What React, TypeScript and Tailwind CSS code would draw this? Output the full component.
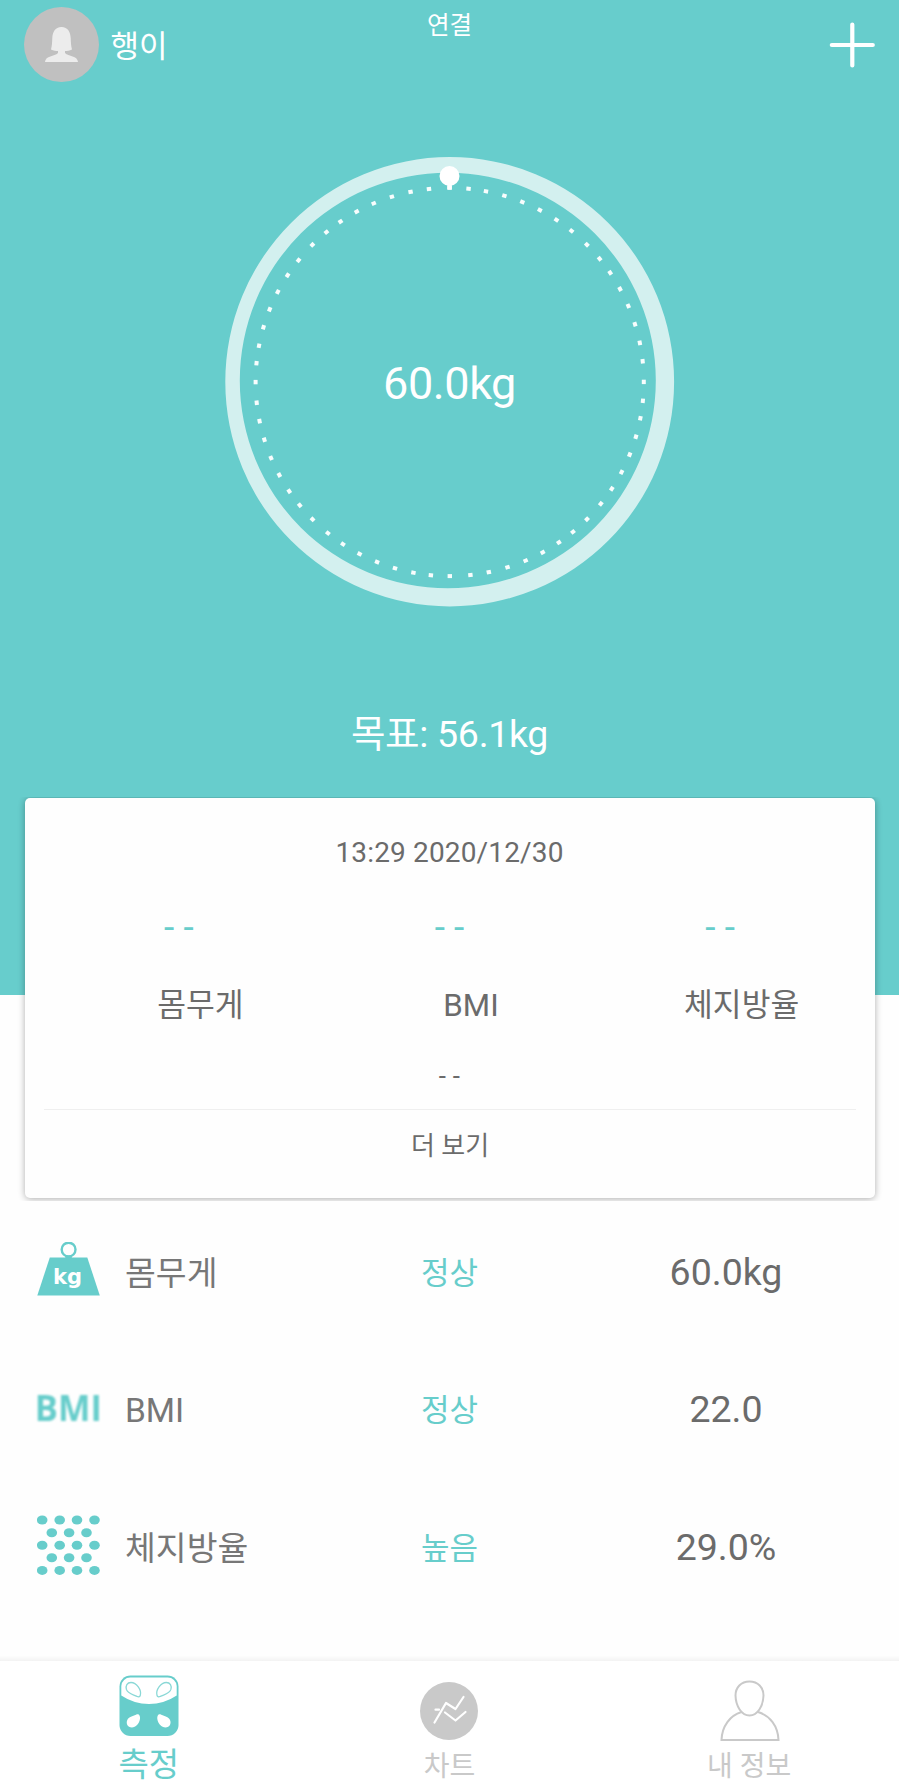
const OCTANT = [0, 5.6, 10.8, 16.4, 22, 27.7, 33.4, 38.9];
const TICKS = [0, 45, 90, 135, 180, 225, 270, 315].flatMap((start) => OCTANT.map((a) => start + a));

const Gauge = () => (
  <svg className="block" width="450" height="450" viewBox="0 0 450 450">
    <path
      fillRule="evenodd"
      fill="#d3f0ef"
      d="M0.3 224.7a224.4 224.6 0 1 0 448.8 0a224.4 224.6 0 1 0 -448.8 0ZM14.8 223.5a208 207.8 0 1 0 416 0a208 207.8 0 1 0 -416 0Z"
    />
    {TICKS.map((angle) => (
      <rect key={angle} x="222.4" y="28.9" width="4.4" height="4" fill="#f8fdfd" transform={`rotate(${angle} 224.7 225)`} />
    ))}
    <circle cx="224.5" cy="19" r="10" fill="#fff" />
    <rect x="222.3" y="26" width="4.5" height="6.3" fill="#fff" />
  </svg>
);

const WeightIcon = () => (
  <svg className="-mt-px" width="64" height="54" viewBox="0 0 64 54">
    <circle cx="31.6" cy="7.6" r="6.9" fill="none" stroke="#67cdcb" strokeWidth="2.4" />
    <path d="M28.3 13.5h6.5v3h-6.5Z" fill="#67cdcb" />
    <path d="M12.8 15.5h37.5L62.8 53.5H.3Z" fill="#67cdcb" />
    <text x="16" y="42" fontSize="20.5" fontWeight="700" fontFamily="DejaVu Sans" fill="#fff" textLength="29" lengthAdjust="spacingAndGlyphs">
      kg
    </text>
  </svg>
);

const BmiIcon = () => (
  <svg width="64" height="36" viewBox="0 0 64 36" className="mt-1 overflow-visible blur-[0.9px]">
    <text x="-2.2" y="30" fontSize="35.5" fontWeight="700" fontFamily="Open Sans" fill="#67cdcb" textLength="67" lengthAdjust="spacingAndGlyphs">
      BMI
    </text>
  </svg>
);

const FatIcon = () => (
  <svg width="64" height="60" viewBox="0 0 64 60">
    {[5, 17.7, 30.2, 42.8, 55.4].map((y, row) =>
      (row % 2 === 0 ? [5.2, 22.7, 40, 57.5] : [14.8, 32.1, 49.5]).map((x) => (
        <ellipse key={`${x}-${y}`} cx={x} cy={y} rx="5.3" ry="4.5" fill="#67cdcb" />
      ))
    )}
  </svg>
);

const ScaleIcon = () => (
  <svg width="60" height="62" viewBox="0 0 60 62">
    <rect x="0.5" y="0.5" width="59" height="60.5" rx="11" fill="#67cdcb" />
    <path d="M2.3 20.5V11a9 9 0 0 1 9-8.6h37.4a9 9 0 0 1 9 8.6v9.5Q45 29 30 29T2.3 20.5Z" fill="#fff" />
    <g fill="#fff" stroke="#8ad8d6" strokeWidth="1.3">
      <path d="M21.3 20.2C22.8 15 17.5 7.5 12 7.5C8 7.5 6.4 11 7.4 14.4C8.8 18.7 14 19.4 18 21.4C20 22.3 20.9 21.6 21.3 20.2Z" />
      <path d="M38 20.2C36.5 15 41.8 7.5 47.3 7.5C51.3 7.5 52.9 11 51.9 14.4C50.5 18.7 45.3 19.4 41.3 21.4C39.3 22.3 38.4 21.6 38 20.2Z" />
    </g>
    <g fill="#fff">
      <path d="M20.5 40.5C22.5 44 19 52.3 13 52.5C8.3 52.5 6.8 48 8.3 45C10 41.4 13.5 41.5 17 39.7C18.8 38.8 19.8 39.3 20.5 40.5Z" />
      <path d="M38.8 40.5C36.8 44 40.3 52.3 46.3 52.5C51 52.5 52.5 48 51 45C49.3 41.4 45.8 41.5 42.3 39.7C40.5 38.8 39.5 39.3 38.8 40.5Z" />
    </g>
  </svg>
);

const ChartIcon = () => (
  <svg width="58" height="58" viewBox="0 0 58 58" fill="none" stroke="#fff" strokeWidth="2.2" strokeLinecap="round" strokeLinejoin="round">
    <circle cx="29" cy="29" r="29" fill="#c9c9c9" stroke="none" />
    <path d="M14.5 40.5L26 21L35.5 27L43.5 15" />
    <path d="M15.5 27.7h3.5M25 30.5L35.5 38.5L45.5 30" />
  </svg>
);

const ProfileIcon = () => (
  <svg className="ml-0.5" width="60" height="62" viewBox="0 0 60 62" fill="none" stroke="#c9c9c9" strokeWidth="2">
    <path d="M29.5 1.5C21 1.5 15.5 7.5 15.5 15.5C15.8 26 21.5 35.5 29.5 35.5C37.5 35.5 43.2 26 43.5 15.5C43.5 7.5 38 1.5 29.5 1.5Z" />
    <path d="M21.5 32C10 35.5 2 46 1.5 60H58.5C58 46 50 35.5 38 32" />
  </svg>
);

const summary = ['몸무게', 'BMI', '체지방율'];

const measurements = [
  { icon: <WeightIcon />, label: '몸무게', status: '정상', value: '60.0kg' },
  { icon: <BmiIcon />, label: 'BMI', status: '정상', value: '22.0' },
  { icon: <FatIcon />, label: '체지방율', status: '높음', value: '29.0%' },
];

const App = () => {
  return (
    <div className="flex h-[1785px] w-[899px] flex-col overflow-hidden bg-[#fefefe] font-['Roboto','Noto_Sans_CJK_KR',sans-serif] text-[#6b6b6b]">
      <section className="h-[995px] shrink-0 bg-[#67cdcc] text-white">
        <header className="grid h-[90px] grid-cols-3 px-6">
          <div className="flex h-[90px] items-center gap-[11px] pl-[0.4px]">
            <div className="-mt-px h-[75px] w-[75px] rounded-full bg-[#c0c0c0]">
              <svg width="75" height="75" viewBox="0 0 75 75" fill="#ececec">
                <path d="M37.5 20C31 20 28.7 25 28.3 31C28.1 35.5 28 39 27 42.5C29.5 43.8 32 44 34 44V46C30.5 49.5 21.5 48.5 21 55H54C53.5 48.5 44.5 49.5 41 46V44C43 44 45.5 43.8 48 42.5C47 39 46.9 35.5 46.7 31C46.3 25 44 20 37.5 20Z" />
              </svg>
            </div>
            <span className="pt-1 text-[31px] leading-[90px]">행이</span>
          </div>
          <span className="text-center text-[24.5px] leading-[52px]">연결</span>
          <div className="flex h-[90px] items-center justify-end">
            <svg width="46" height="46" viewBox="0 0 46 46" stroke="#fff" strokeWidth="4.2" strokeLinecap="round">
              <path d="M23.3 2.5v41M2.8 23h41" />
            </svg>
          </div>
        </header>

        <div className="mt-[67px] flex justify-center">
          <div className="grid h-[450px] w-[450px] place-items-center *:col-start-1 *:row-start-1">
            <Gauge />
            <span className="pt-1 text-[45px] leading-[60px] tracking-[-0.4px]">60.0kg</span>
          </div>
        </div>
        <p className="mt-[102px] text-center text-[37.5px] leading-[50px] tracking-[-0.3px]">목표: 56.1kg</p>
      </section>

      <div className="relative -mt-[198px] h-[404px] shrink-0 overflow-hidden px-[24.5px] pt-px">
        <div className="h-[400px] rounded-[5px] bg-[#fefefe] px-[19px] shadow-[0_1px_7px_rgba(0,0,0,0.32)]">
          <p className="pt-[35px] text-center text-[28px] leading-10 tracking-[0.15px]">13:29 2020/12/30</p>
          <div className="mt-[35px] grid grid-cols-3">
            {summary.map((label) => (
              <div key={label} className="text-center">
                <p className="text-[37px] leading-10 text-[#67cdcb]">- -</p>
                <p className="mt-[38px] pl-[43px] text-[31.3px] leading-10">{label}</p>
              </div>
            ))}
          </div>
          <p className="mt-[30px] text-center text-[26px] leading-10 tracking-[0.3px]">- -</p>
          <div className="mt-[13px] border-t border-[#efefef] pt-[15px]">
            <p className="pl-px text-center text-[26px] leading-[42px]">더 보기</p>
          </div>
        </div>
      </div>

      <ul className="h-[455px] shrink-0">
        {measurements.map((item) => (
          <li key={item.label} className="grid h-[137.5px] grid-cols-[310px_279px_274px_36px] items-center">
            <div className="flex items-center pl-[36.5px]">
              <div className="flex w-[88.5px] items-center">{item.icon}</div>
              <span className="pt-2 text-[33.5px] leading-[50px] text-[#777]">{item.label}</span>
            </div>
            <span className="pt-2 text-center text-[31px] leading-[50px] text-[#67cdcb]">{item.status}</span>
            <span className="pt-1 text-center text-[37.5px] leading-[50px]">{item.value}</span>
          </li>
        ))}
      </ul>

      <nav className="h-[129px] shrink-0 bg-white text-[#c9c9c9]">
        <div className="h-[5px] bg-linear-to-b from-[#fdfdfd] to-[#f3f3f3]" />
        <div className="grid grid-cols-3">
          <div className="flex flex-col items-center pt-3.5 pr-0.5 text-[#67cdcb]">
            <ScaleIcon />
            <span className="mt-2 text-[33px] leading-10">측정</span>
          </div>
          <div className="flex flex-col items-center pt-[21px]">
            <ChartIcon />
            <span className="mt-[7px] text-[28px] leading-10">차트</span>
          </div>
          <div className="flex flex-col items-center pt-[19px]">
            <ProfileIcon />
            <span className="mt-[5px] text-[28px] leading-10">내 정보</span>
          </div>
        </div>
      </nav>
    </div>
  );
};

export default App;
